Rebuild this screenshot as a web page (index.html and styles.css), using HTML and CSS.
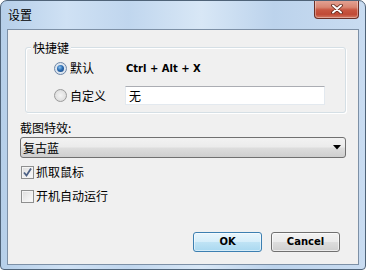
FILE: index.html
```html
<!DOCTYPE html>
<html>
<head>
<meta charset="utf-8">
<link rel="stylesheet" href="styles.css">
</head>
<body>
<div class="window">
  <div class="titlebar">
    <span class="title">设置</span>
    <div class="close">
      <svg width="12" height="10" viewBox="0 0 12 10">
        <path d="M2 1.5 L10 8.5 M10 1.5 L2 8.5" stroke="#5a2216" stroke-width="3.6" stroke-linecap="round" fill="none"/>
        <path d="M2 1.5 L10 8.5 M10 1.5 L2 8.5" stroke="#ffffff" stroke-width="2" stroke-linecap="round" fill="none"/>
      </svg>
    </div>
  </div>
  <div class="client">
    <div class="group">
      <span class="group-label">快捷键</span>
      <div class="grid">
        <span class="radio checked"></span><span class="lbl">默认</span><span class="hotkey">Ctrl + Alt + X</span>
        <span class="radio"></span><span class="lbl">自定义</span><div class="input">无</div>
      </div>
    </div>
    <div class="field-label">截图特效:</div>
    <div class="select">
      <span>复古蓝</span>
      <svg width="8" height="5" viewBox="0 0 8 5"><path d="M0 0 H8 L4 4.5 Z" fill="#000"/></svg>
    </div>
    <div class="check first">
      <span class="box">
        <svg width="11" height="11" viewBox="0 0 11 11"><path d="M2 5.5 L4.5 8.5 L9 1.5" stroke="#4d6185" stroke-width="1.8" fill="none"/></svg>
      </span>
      <span>抓取鼠标</span>
    </div>
    <div class="check second">
      <span class="box"></span>
      <span>开机自动运行</span>
    </div>
    <div class="buttons">
      <div class="btn default">OK</div>
      <div class="btn">Cancel</div>
    </div>
  </div>
</div>
</body>
</html>
```

FILE: styles.css
```css
html, body {
  margin: 0;
  padding: 0;
  background: #ffffff;
}
body {
  width: 366px;
  height: 270px;
  font-family: "Noto Sans CJK SC", "Noto Sans", sans-serif;
  font-size: 12px;
  color: #000;
}
.window {
  box-sizing: border-box;
  width: 366px;
  height: 270px;
  border: 1px solid #4f6378;
  border-radius: 7px 7px 4px 4px;
  background: linear-gradient(90deg, #b6cfe9 0%, #cfe1f4 18%, #c0d6ee 35%, #d8e7f6 55%, #bcd3ec 75%, #c9dcf1 100%);
  display: flex;
  flex-direction: column;
  overflow: hidden;
}
.titlebar {
  height: 28px;
  display: flex;
  justify-content: space-between;
  align-items: flex-start;
  flex: none;
}
.title {
  padding: 6px 0 0 7px;
  line-height: 16px;
  font-size: 12px;
}
.close {
  width: 45px;
  height: 19px;
  box-sizing: border-box;
  margin: -1px 6px 0 0;
  border: 1px solid #6b2f26;
  border-top: none;
  border-radius: 0 0 4px 4px;
  background: linear-gradient(180deg, #e4a597 0%, #d98672 40%, #c85641 55%, #c04a36 80%, #d37a64 100%);
  display: flex;
  align-items: center;
  justify-content: center;
  box-shadow: inset 0 0 0 1px rgba(255,255,255,0.35);
}
.client {
  flex: none;
  height: 236px;
  box-sizing: border-box;
  margin: 0 6px;
  border: 1px solid #7d90a6;
  background: #f0f0f0;
  padding: 0 12px;
  display: flex;
  flex-direction: column;
}
.group {
  position: relative;
  margin: 17px 0 0 5px;
  border: 1px solid #d5dfe5;
  border-radius: 3px;
  box-shadow: inset 1px 1px 0 #ffffff, 1px 1px 0 #ffffff;
  padding: 10px 20px 7px 28px;
}
.group-label {
  position: absolute;
  top: -8px;
  left: 5px;
  padding: 0 2px;
  background: #f0f0f0;
  line-height: 16px;
}
.grid {
  display: grid;
  grid-template-columns: 13px 58px 1fr;
  grid-template-rows: 20px 19px;
  row-gap: 8px;
  align-items: center;
}
.radio {
  width: 13px;
  height: 13px;
  box-sizing: border-box;
  border-radius: 50%;
  border: 1px solid #9b9b9b;
  background: radial-gradient(circle at 50% 50%, #f4f4f4 0%, #e2e2e2 60%, #cfcfcf 100%);
  position: relative;
}
.radio.checked {
  border-color: #6e86a6;
  background: radial-gradient(circle at 50% 50%, #e9eff6 0%, #d4dfea 100%);
}
.radio.checked::after {
  content: "";
  position: absolute;
  left: 2px;
  top: 2px;
  width: 7px;
  height: 7px;
  border-radius: 50%;
  background: radial-gradient(circle at 40% 35%, #8bc1ee 0%, #2a6cb2 45%, #163f7a 100%);
}
.lbl {
  padding-left: 3px;
  line-height: 16px;
}
.hotkey {
  font-family: "DejaVu Sans", sans-serif;
  font-weight: bold;
  font-size: 10px;
  padding-left: 1px;
}
.input {
  width: 200px;
  height: 19px;
  box-sizing: border-box;
  background: #ffffff;
  border: 1px solid #e3e9ef;
  border-top-color: #abadb3;
  padding-left: 3px;
  line-height: 17px;
}
.field-label {
  margin-top: 7px;
  line-height: 16px;
}
.select {
  margin-top: 1px;
  height: 21px;
  box-sizing: border-box;
  border: 1px solid #707070;
  border-radius: 3px;
  background: linear-gradient(180deg, #f2f2f2 0%, #ebebeb 48%, #dddddd 52%, #cfcfcf 100%);
  display: flex;
  align-items: center;
  justify-content: space-between;
  padding: 0 4px 0 2px;
  line-height: 16px;
}
.check {
  display: flex;
  align-items: center;
  height: 16px;
  line-height: 16px;
}
.check.first { margin-top: 6px; }
.check.second { margin-top: 8px; }
.box {
  width: 13px;
  height: 13px;
  box-sizing: border-box;
  margin: 0 2px 0 1px;
  border: 1px solid #8e8f8f;
  background: linear-gradient(135deg, #dcdcdc 0%, #f0f0f0 60%, #fbfbfb 100%);
  box-shadow: inset 0 0 0 1px #f4f4f4;
  display: flex;
  align-items: center;
  justify-content: center;
}
.buttons {
  margin-top: 28px;
  display: flex;
  justify-content: flex-end;
  gap: 9px;
  padding-right: 6px;
}
.btn {
  width: 69px;
  height: 20px;
  box-sizing: border-box;
  border: 1px solid #707070;
  border-radius: 3px;
  background: linear-gradient(180deg, #f2f2f2 0%, #ebebeb 48%, #dddddd 52%, #cfcfcf 100%);
  box-shadow: inset 0 0 0 1px rgba(255,255,255,0.6);
  font-family: "DejaVu Sans", sans-serif;
  font-weight: bold;
  font-size: 10px;
  line-height: 18px;
  text-align: center;
}
.btn.default {
  border-color: #3c7fb1;
  background: linear-gradient(180deg, #e8f5fc 0%, #d6eefa 48%, #bfe3f5 52%, #a9d8f0 100%);
  box-shadow: inset 0 0 0 1px rgba(255,255,255,0.5);
}
```
